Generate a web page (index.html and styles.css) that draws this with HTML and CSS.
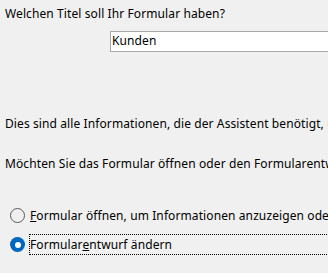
FILE: index.html
```html
<!DOCTYPE html>
<html lang="de">
<head>
    <meta charset="UTF-8">
    <title>Formular-Assistent</title>
    <link rel="stylesheet" href="styles.css">
</head>
<body>
    <div class="wizard">
        <p class="label first">Welchen Titel soll Ihr Formular haben?</p>
        <div class="title-box">Kunden</div>

        <p class="label info">Dies sind alle Informationen, die der Assistent benötigt, um das Formular zu erstellen.</p>
        <p class="label ask">Möchten Sie das Formular öffnen oder den Formularentwurf ändern?</p>

        <div class="options">
            <div class="option">
                <span class="radio"></span>
                <span class="option-text"><u>F</u>ormular öffnen, um Informationen anzuzeigen oder einzugeben.</span>
            </div>
            <div class="option">
                <span class="radio checked"></span>
                <span class="option-text focused">Formular<u>e</u>ntwurf ändern</span>
            </div>
        </div>
    </div>
</body>
</html>
```

FILE: styles.css
```css
* {
    margin: 0;
    padding: 0;
    box-sizing: border-box;
}

body {
    background-color: #f0f0f0;
    color: #000;
    font-family: 'Noto Sans', 'Open Sans', sans-serif;
    font-size: 12px;
    letter-spacing: 0.1px;
    overflow: hidden;
}

.wizard {
    padding-left: 5px;
    width: 600px;
}

.label {
    line-height: 16px;
    white-space: nowrap;
}

.first {
    padding-top: 6px;
}

.title-box {
    margin-left: 105px;
    margin-top: 9px;
    width: 260px;
    height: 21px;
    border: 1px solid #a8a8a8;
    background-color: #fff;
    padding-left: 1px;
    line-height: 18px;
}

.info {
    margin-top: 64px;
}

.ask {
    margin-top: 24px;
}

.options {
    margin-top: 33px;
    display: flex;
    flex-direction: column;
    gap: 8px;
}

.option {
    display: flex;
    align-items: center;
    height: 21px;
    white-space: nowrap;
}

.radio {
    width: 15px;
    height: 15px;
    margin-left: 5px;
    margin-right: 4px;
    border: 1px solid #5a5a5a;
    border-radius: 50%;
    flex-shrink: 0;
    background-color: #f0f0f0;
}

.radio.checked {
    border: none;
    background-color: #0067c0;
    display: flex;
    align-items: center;
    justify-content: center;
}

.radio.checked::after {
    content: "";
    width: 6px;
    height: 6px;
    border-radius: 50%;
    background-color: #fff;
}

.option-text {
    line-height: 19px;
    border: 1px solid transparent;
}

.option-text.focused {
    border: 1px dotted #000;
    width: 400px;
}
```
